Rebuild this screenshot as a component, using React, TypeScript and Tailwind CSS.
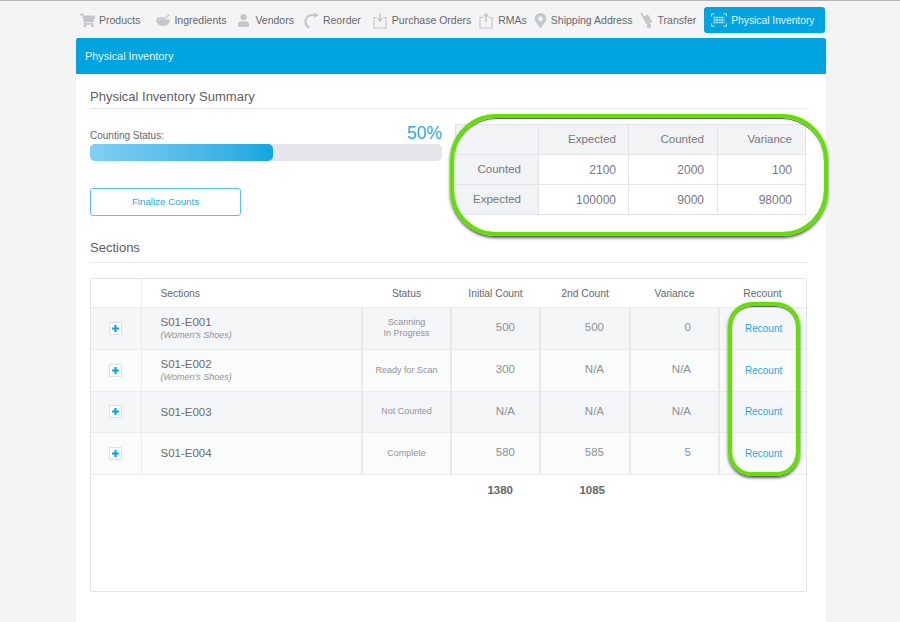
import { Fragment } from "react";
import { FaMapMarkerAlt, FaShoppingCart, FaUser } from "react-icons/fa";

const font = { fontFamily: '"Liberation Sans", Arial, sans-serif' };

function BowlIcon() {
  return (
    <svg width="16" height="14" viewBox="0 0 16 14" fill="#c4c7ca">
      <path d="M1 6.5h14c0 3.6-2.6 6.5-7 6.5S1 10.1 1 6.5z" />
      <path d="M9 5.6 13.4 1.2l1.2 1L11 5.6z" />
      <ellipse cx="6" cy="5.4" rx="4.5" ry="1.2" />
    </svg>
  );
}

function ReorderIcon() {
  return (
    <svg width="15" height="17" viewBox="0 0 15 17" fill="none">
      <path d="M11.5 3.2H8.2C4.2 3.2 1.5 6 1.5 9.5c0 2.7 1.5 5 3.8 6.3" stroke="#c4c7ca" strokeWidth="2.2" />
      <path d="M10.5 0.4 14.6 3.2 10.5 6z" fill="#c4c7ca" />
    </svg>
  );
}

function TrayIcon({ up }: { up?: boolean }) {
  return (
    <svg width="14" height="17" viewBox="0 0 14 17" fill="none">
      <path d="M4 5.5H1v10.5h12V5.5h-3" stroke="#c4c7ca" strokeWidth="1.2" />
      {up ? (
        <path d="M7 10V2M4.6 4.4 7 1.8l2.4 2.6" stroke="#c4c7ca" strokeWidth="1.5" />
      ) : (
        <path d="M7 1v8M4.6 6.6 7 9.2l2.4-2.6" stroke="#c4c7ca" strokeWidth="1.5" />
      )}
    </svg>
  );
}

function TruckIcon() {
  return (
    <svg width="14" height="17" viewBox="0 0 14 17" fill="#c4c7ca">
      <path d="M0.5 1.2 2 .6l5.6 11-1.4.7z" />
      <path d="M3.6 4.6 8 2.4l4.4 7.6-4.5 2.3z" />
      <circle cx="9" cy="14" r="2.2" />
    </svg>
  );
}

function ScanIcon() {
  return (
    <svg width="16" height="14" viewBox="0 0 16 14" fill="none" stroke="#d3eefa">
      <path d="M.6 3.4V.8h2.8M12.6.8h2.8v2.6M15.4 10.6v2.6h-2.8M3.4 13.2H.6v-2.6" strokeWidth="1" />
      <path d="M2.5 4.5h11M2.5 7h11M2.5 9.5h11" strokeWidth="1.5" strokeDasharray="2 .6" />
    </svg>
  );
}

const navItems = [
  { label: "Products", icon: <FaShoppingCart size={15} color="#c4c7ca" />, iconBox: "w-[19px]", space: "mr-[15px]" },
  { label: "Ingredients", icon: <BowlIcon />, iconBox: "w-[19px]", space: "mr-[11px]" },
  { label: "Vendors", icon: <FaUser size={13} color="#c4c7ca" />, iconBox: "w-[18px]", space: "mr-[10px]" },
  { label: "Reorder", icon: <ReorderIcon />, iconBox: "w-[19px]", space: "mr-[12px]" },
  { label: "Purchase Orders", icon: <TrayIcon />, iconBox: "w-[19px]", space: "mr-[8px]" },
  { label: "RMAs", icon: <TrayIcon up />, iconBox: "w-[19px]", space: "mr-[6px]" },
  { label: "Shipping Address", icon: <FaMapMarkerAlt size={15} color="#c4c7ca" />, iconBox: "w-[18px]", space: "mr-[7px]" },
  { label: "Transfer", icon: <TruckIcon />, iconBox: "w-[18px]", space: "mr-[8px]" },
];

const rows = [
  { name: "S01-E001", sub: "(Women's Shoes)", status: ["Scanning", "In Progress"], initial: "500", second: "500", variance: "0", h: "h-[42px]", bg: "bg-[#f5f6f8]" },
  { name: "S01-E002", sub: "(Women's Shoes)", status: ["Ready for Scan"], initial: "300", second: "N/A", variance: "N/A", h: "h-[42px]", bg: "bg-[#fafbfb]" },
  { name: "S01-E003", status: ["Not Counted"], initial: "N/A", second: "N/A", variance: "N/A", h: "h-[41px]", bg: "bg-[#f5f6f8]" },
  { name: "S01-E004", status: ["Complete"], initial: "580", second: "585", variance: "5", h: "h-[42px]", bg: "bg-[#fafbfb]" },
];

const summaryRows = [
  ["Counted", "2100", "2000", "100"],
  ["Expected", "100000", "9000", "98000"],
];

function SectionTitle({ children, className }: { children: string; className: string }) {
  return <h2 className={`border-b border-[#e6e7e9] text-[13px] text-[#5f6063] ${className}`}>{children}</h2>;
}

export default function App() {
  return (
    <div style={font} className="h-[622px] w-[900px] overflow-hidden border-t border-[#b4b4b4] bg-[#f4f4f5]">
      <nav className="flex h-[37px] items-start pl-[80px] pt-[6px]">
        {navItems.map((item) => (
          <div key={item.label} className={`flex h-[26px] items-center text-[10.5px] text-[#66676b] ${item.space}`}>
            <span className={`flex items-center ${item.iconBox}`}>{item.icon}</span>
            <span className="pt-px">{item.label}</span>
          </div>
        ))}
        <div className="flex h-[26px] w-[121px] items-center gap-[4px] rounded-[3px] bg-[#00a4e0] pl-[7px] text-[10.25px] text-[#e3f5fc]">
          <ScanIcon />
          <span className="pt-px">Physical Inventory</span>
        </div>
      </nav>

      <main className="ml-[76px] h-[584px] w-[750px] bg-white">
        <header className="flex h-[36px] items-center rounded-t-[2px] bg-[#00a4e0] pl-[9px] pt-px text-[10.9px] text-[#e6f6fd]">
          Physical Inventory
        </header>

        <div className="pl-[14px] pr-[19px]">
          <SectionTitle className="pb-[4px] pt-[15px] leading-[15px]">Physical Inventory Summary</SectionTitle>

          <div className="relative flex justify-between pt-[14px]">
            <div className="w-[352px]">
              <div className="flex h-[21px] items-end justify-between">
                <span className="pb-[2px] text-[10px] leading-[12px] text-[#66676b]">Counting Status:</span>
                <span className="text-[17.5px] leading-[21px] text-[#29a9e1]">50%</span>
              </div>
              <div className="h-[17px] rounded-[5px] bg-[#e5e6e9]">
                <div className="h-full w-[183px] rounded-[5px] bg-gradient-to-r from-[#7ed0f2] to-[#0ca7e1]" />
              </div>
              <button className="mt-[27px] h-[28px] w-[151px] rounded-[3px] border border-[#5cc1ee] text-[9.75px] text-[#29a9e1]">
                Finalize Counts
              </button>
            </div>

            <table className="mr-px mt-px h-[90px] w-[350px] table-fixed border-collapse text-[12px] text-[#77787b]">
              <colgroup>
                <col className="w-[83px]" />
                <col className="w-[90px]" />
                <col className="w-[89px]" />
                <col className="w-[88px]" />
              </colgroup>
              <tbody>
                <tr className="h-[30px] bg-[#f2f3f5] text-[11.5px]">
                  <td className="border border-[#e3e4e7]" />
                  <td className="border border-[#e3e4e7] pr-[12px] text-right">Expected</td>
                  <td className="border border-[#e3e4e7] pr-[13px] text-right">Counted</td>
                  <td className="border border-[#e3e4e7] pr-[13px] text-right">Variance</td>
                </tr>
                {summaryRows.map((row) => (
                  <tr key={row[0]} className="h-[30px]">
                    <td className="border border-[#e3e4e7] bg-[#f2f3f5] pr-[17px] text-right text-[11.5px]">{row[0]}</td>
                    <td className="border border-[#e3e4e7] pr-[12px] text-right">{row[1]}</td>
                    <td className="border border-[#e3e4e7] pr-[13px] text-right">{row[2]}</td>
                    <td className="border border-[#e3e4e7] pr-[13px] text-right">{row[3]}</td>
                  </tr>
                ))}
              </tbody>
            </table>

            <div className="absolute left-[360px] top-[5px] h-[122px] w-[378px] rounded-[46px] border-4 border-[#62e000] shadow-[0_2px_3px_#555,inset_0_1px_1px_#555]" />
          </div>

          <SectionTitle className="mt-[24px] pb-[6px] leading-[16px]">Sections</SectionTitle>

          <div className="relative mt-[15px] h-[314px] rounded-[2px] border border-[#e2e3e5]">
            <table className="w-full table-fixed border-collapse">
              <colgroup>
                <col className="w-[50px]" />
                <col className="w-[221px]" />
                <col className="w-[89px]" />
                <col className="w-[89px]" />
                <col className="w-[90px]" />
                <col className="w-[89px]" />
                <col />
              </colgroup>
              <thead>
                <tr className="h-[28px] text-[10.3px] font-normal text-[#66676b]">
                  <th className="border-r border-[#eceded] font-normal" />
                  <th className="pl-[19px] pt-[2px] text-left font-normal">Sections</th>
                  <th className="pt-[2px] font-normal">Status</th>
                  <th className="pt-[2px] font-normal">Initial Count</th>
                  <th className="pt-[2px] font-normal">2nd Count</th>
                  <th className="pt-[2px] font-normal">Variance</th>
                  <th className="pt-[2px] font-normal">Recount</th>
                </tr>
              </thead>
              <tbody>
                {rows.map((row) => (
                  <tr key={row.name} className={`${row.h} ${row.bg} border-y border-[#ebeced] text-[#8f9093]`}>
                    <td className="border-r border-[#ebeced]">
                      <div className="mx-auto flex h-[13px] w-[13px] items-center justify-center rounded-[1px] border border-[#dfe0e2] bg-white text-[#0ba5e2]">
                        <svg width="9" height="9" viewBox="0 0 9 9" fill="currentColor">
                          <path d="M3.4 1h2.2v2.4H8v2.2H5.6V8H3.4V5.6H1V3.4h2.4z" />
                        </svg>
                      </div>
                    </td>
                    <td className="border-r-2 border-[#e8e9eb] pl-[19px]">
                      <div className="text-[11.5px] leading-[14px] text-[#6b6c6f]">{row.name}</div>
                      {row.sub && <div className="text-[9px] italic leading-[13px] text-[#929396]">{row.sub}</div>}
                    </td>
                    <td className="border-r-2 border-[#e8e9eb] text-center text-[9px] leading-[11px] text-[#929396]">
                      {row.status.map((line, i) => (
                        <Fragment key={line}>
                          {i > 0 && <br />}
                          {line}
                        </Fragment>
                      ))}
                    </td>
                    <td className="border-r-2 border-[#e8e9eb] pr-[24px] text-right text-[11.5px]">{row.initial}</td>
                    <td className="border-r-2 border-[#e8e9eb] pr-[25px] text-right text-[11.5px]">{row.second}</td>
                    <td className="border-r-2 border-[#e8e9eb] pr-[27px] text-right text-[11.5px]">{row.variance}</td>
                    <td className="pl-[25px] text-[10px] text-[#29a9e1]">Recount</td>
                  </tr>
                ))}
                <tr className="h-[32px] text-[11.5px] font-bold text-[#66676b]">
                  <td colSpan={3} />
                  <td className="pr-[27px] text-right">1380</td>
                  <td className="pr-[25px] text-right">1085</td>
                  <td colSpan={2} />
                </tr>
              </tbody>
            </table>

            <div className="absolute left-[637px] top-[23px] h-[174px] w-[72px] rounded-[24px] border-4 border-[#62e000] shadow-[0_2px_3px_#555,inset_0_1px_1px_#555]" />
          </div>
        </div>
      </main>
    </div>
  );
}
